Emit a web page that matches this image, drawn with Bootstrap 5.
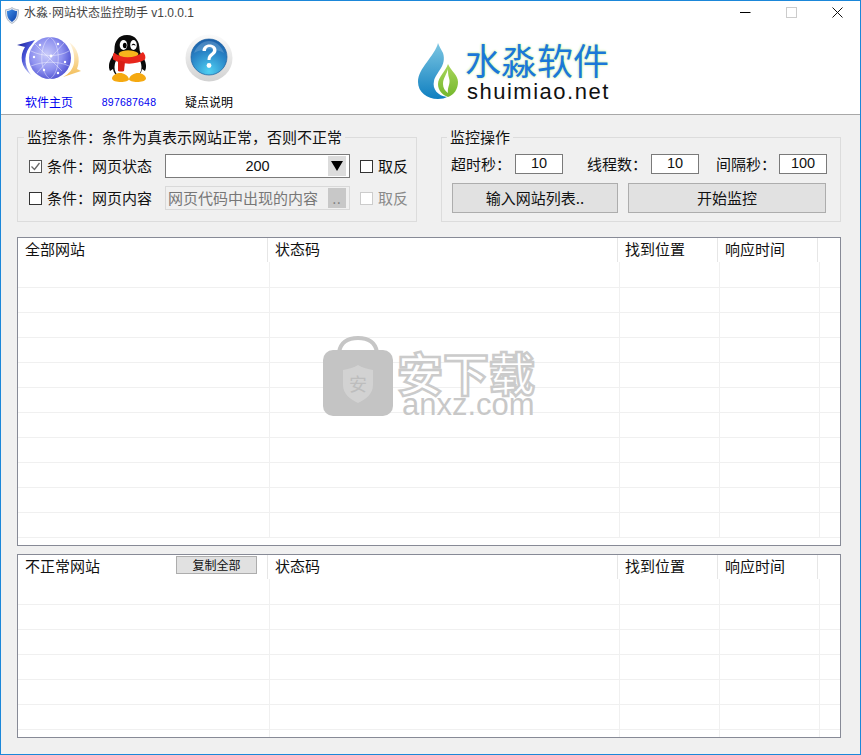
<!DOCTYPE html>
<html lang="zh-CN">
<head>
    <meta charset="UTF-8">
    <meta name="viewport" content="width=device-width, initial-scale=1.0">
    <title>水淼·网站状态监控助手</title>
    <link href="https://cdn.jsdelivr.net/npm/bootstrap@5.3.3/dist/css/bootstrap.min.css" rel="stylesheet">
    <style>
        html, body {
            margin: 0;
            height: 755px;
            overflow: hidden;
        }
        body {
            background: #f0f0f0;
            color: #111;
            font-family: "Noto Sans CJK SC", "Liberation Sans", sans-serif;
            font-size: 15px;
            line-height: 16px;
        }
        .app-window {
            height: 755px;
            border: 1px solid #1b87d9;
            background: #f0f0f0;
        }
        .top-area {
            height: 113px;
            background: #fff;
            border-bottom: 1px solid #a8a8a8;
            box-sizing: content-box;
        }
        .title-bar {
            height: 28px;
            padding: 0 0 0 4px;
        }
        .title-text {
            font-family: "Liberation Sans", "Noto Sans CJK SC", sans-serif;
            font-size: 12px;
            color: #444;
            margin-left: 5px;
            margin-top: -5px;
            line-height: 16px;
        }
        .win-btns {
            margin-right: 17px;
            gap: 35px;
            margin-top: -6px;
        }
        .tool-row {
            padding-left: 8px;
            height: 85px;
        }
        .tool-item {
            width: 80px;
            height: 80px;
            font-size: 12px;
            color: #000;
            text-decoration: none;
            padding-top: 5px;
        }
        .tool-item .tool-pic {
            height: 50px;
        }
        .tool-item .tool-label {
            margin-top: 11px;
            line-height: 14px;
        }
        .tool-blue {
            color: #0000f0;
        }
        .tool-num {
            font-family: "Liberation Sans", sans-serif;
            font-size: 10.5px;
            letter-spacing: .2px;
        }
        .brand {
            margin-left: 168px;
            margin-top: 10px;
            gap: 6px;
        }
        .brand-cn {
            font-size: 36px;
            line-height: 40px;
            color: #1b78d8;
            text-shadow: 0 0 3px #cdf0a8, 0 0 2px #d9f5bd;
        }
        .brand-en {
            font-family: "Liberation Sans", sans-serif;
            font-size: 22px;
            line-height: 22px;
            letter-spacing: 1.5px;
            color: #111;
            margin-top: 2px;
            margin-left: 2px;
        }
        .main-area {
            padding: 14px 19px 0 16px;
        }
        .group-box {
            width: 400px;
            border: 1px solid #dcdcdc;
            padding: 0 0 11px 11px;
            margin: 0;
            min-width: 0;
            height: 93px;
        }
        .group-box legend {
            float: none;
            width: auto;
            font-size: 15px;
            line-height: 16px;
            margin: 0 0 9px -5px;
            padding: 0 3px;
        }
        .group-ops {
            padding-left: 9px;
        }
        .group-ops legend {
            margin-left: -4px;
        }
        /* the traditional face sets the full-width colon in the middle of its cell */
        .mid-colon {
            font-family: "Noto Sans CJK TC", sans-serif;
        }
        .check-box.form-check-input {
            width: 13px;
            height: 13px;
            margin: 0 5px 0 0;
            border: 1px solid #333;
            border-radius: 0;
            flex: none;
            box-shadow: none;
        }
        .check-box.form-check-input:checked {
            background-color: #fff;
            border-color: #555;
            background-size: 11px;
            background-image: url("data:image/svg+xml,%3Csvg xmlns='http://www.w3.org/2000/svg' viewBox='0 0 11 11'%3E%3Cpath d='M1.5 5.5l3 3 5-6.500' fill='none' stroke='%23666' stroke-width='1.300'/%3E%3C/svg%3E");
        }
        .check-box.form-check-input:disabled {
            opacity: 1;
            border-color: #ccc;
        }
        .cond-row {
            height: 24px;
        }
        .cond-label {
            width: 118px;
            flex: none;
            white-space: nowrap;
        }
        .status-select.form-select {
            width: 185px;
            flex: none;
            height: 24px;
            padding: 0;
            border: 1px solid #7a7a7a;
            border-radius: 0;
            background-color: #fff;
            font-family: "Liberation Sans", sans-serif;
            font-size: 14.5px;
            line-height: 22px;
            text-align: center;
            text-align-last: center;
            color: #111;
            box-shadow: none;
            background-size: 18px 20px;
            background-position: right 3px center;
            background-image: url("data:image/svg+xml,%3Csvg xmlns='http://www.w3.org/2000/svg' viewBox='0 0 18 20'%3E%3Crect width='18' height='20' fill='%23dcdcdc'/%3E%3Cpath d='M3 5h12l-6 10z' fill='%23000'/%3E%3C/svg%3E");
        }
        .content-box {
            width: 185px;
            flex: none;
            height: 24px;
            border: 1px solid #d9d9d9;
            background: #f0f0f0;
            padding: 1px 3px 1px 0;
        }
        .content-box .form-control {
            border: 0;
            border-radius: 0;
            background: transparent;
            padding: 0 0 0 2px;
            font: inherit;
            color: #777;
            min-width: 0;
        }
        .dots-btn.btn {
            width: 18px;
            height: 20px;
            padding: 0;
            border: 0;
            border-radius: 0;
            background: #c8c8c8;
            color: #777;
            font-size: 13px;
            opacity: 1;
            letter-spacing: 1px;
            line-height: 22px;
        }
        .invert-wrap {
            margin-left: 10px;
            white-space: nowrap;
            flex: none;
        }
        .off-text {
            color: #8a8a8a;
        }
        .param-row {
            height: 20px;
            margin-bottom: 9px;
        }
        .param-label {
            white-space: nowrap;
            width: 64px;
            flex: none;
        }
        .gap-one {
            margin-left: 24px;
        }
        .gap-two {
            margin-left: 17px;
            width: 63px;
        }
        .num-input.form-control {
            width: 48px;
            height: 20px;
            min-height: 0;
            padding: 0;
            border: 1px solid #7a7a7a;
            border-radius: 0;
            background: #fff;
            font-family: "Liberation Sans", sans-serif;
            font-size: 14.5px;
            text-align: center;
            color: #111;
            flex: none;
        }
        .act-row {
            gap: 10px;
            margin-left: 1px;
        }
        .act-btn.btn {
            height: 30px;
            padding: 0;
            border: 1px solid #adadad;
            border-radius: 0;
            background: #e1e1e1;
            color: #111;
            font-size: 15px;
            line-height: 16px;
            width: 198px;
        }
        .act-btn.list-btn {
            width: 166px;
        }
        .web-table-wrap {
            border: 1px solid #878a96;
            background: #fff;
            width: 824px;
            overflow: hidden;
        }
        .t-all {
            height: 309px;
            margin-top: 15px;
        }
        .t-bad {
            height: 184px;
            margin-top: 8px;
        }
        .web-table-wrap .table {
            table-layout: fixed;
            width: 822px;
            margin: 0;
            --bs-table-bg: transparent;
            border-collapse: collapse;
        }
        .c-a { width: 251px; }
        .c-b { width: 350px; }
        .c-c { width: 100px; }
        .web-table-wrap th {
            height: 24px;
            padding: 3px 0 0 6px;
            font-weight: 400;
            font-size: 15px;
            line-height: 16px;
            vertical-align: top;
            border: 0;
            color: #111;
            white-space: nowrap;
            background: linear-gradient(#e6e6e6, #e6e6e6) no-repeat calc(100% - 1px) 0 / 1px 100%;
        }
        .web-table-wrap th:first-child {
            padding-left: 7px;
        }
        .web-table-wrap th:last-child {
            background: none;
        }
        .web-table-wrap td {
            height: 25px;
            padding: 0;
            border-width: 0 1px 1px 0;
            border-style: solid;
            border-color: #f0f0f0;
        }
        .web-table-wrap td:last-child {
            border-right: 0;
        }
        .copy-btn.btn {
            width: 81px;
            height: 18px;
            padding: 0;
            margin: -2px 12px 0 0;
            border: 1px solid #adadad;
            border-radius: 0;
            background: #e1e1e1;
            color: #111;
            font-size: 12px;
            line-height: 14px;
        }
        .water-mark {
            position: absolute;
            left: 321px;
            top: 334px;
            width: 220px;
            height: 84px;
        }
        .mark-cn {
            position: absolute;
            left: 75px;
            top: 15px;
            font-size: 46px;
            line-height: 42px;
            font-weight: 700;
            white-space: nowrap;
            color: #fff;
            -webkit-text-stroke: 2.5px #cbcbcb;
        }
        .mark-en {
            position: absolute;
            left: 80px;
            top: 57px;
            font-family: "Liberation Sans", sans-serif;
            font-size: 31px;
            line-height: 26px;
            color: #c8c8c8;
            white-space: nowrap;
        }
    </style>
</head>
<body>
    <div class="app-window position-relative">
        <div class="top-area">
            <div class="title-bar d-flex align-items-center">
                <svg width="14" height="17" viewBox="0 0 14 17">
                    <defs>
                        <linearGradient id="shieldFill" x1="0" y1="0" x2="1" y2="1">
                            <stop offset="0" stop-color="#3f8fe8"/>
                            <stop offset="1" stop-color="#0b3fa8"/>
                        </linearGradient>
                    </defs>
                    <path d="M7 .5C5 2 3 2.600 .5 2.800c0 6 .7 10.700 6.500 13.700 5.800-3 6.500-7.700 6.500-13.700C11 2.600 9 2 7 .5z" fill="#dfe6ef" stroke="#9aa5b5" stroke-width=".7"/>
                    <path d="M7 2.200C5.400 3.300 3.800 3.900 2 4.100c0 4.700.6 8.500 5 10.800 4.400-2.300 5-6.100 5-10.800-1.800-.2-3.400-.8-5-1.900z" fill="url(#shieldFill)"/>
                </svg>
                <span class="title-text flex-grow-1">水淼·网站状态监控助手 v1.0.0.1</span>
                <div class="win-btns d-flex align-items-center">
                    <svg width="11" height="11" viewBox="0 0 11 11"><path d="M0 5.500h10.500" stroke="#000" stroke-width="1"/></svg>
                    <svg width="11" height="11" viewBox="0 0 11 11"><rect x=".5" y=".5" width="10" height="10" fill="none" stroke="#ccc"/></svg>
                    <svg width="11" height="11" viewBox="0 0 11 11"><path d="M.5.500l10 10M10.500.500l-10 10" stroke="#111" stroke-width="1"/></svg>
                </div>
            </div>
            <div class="tool-row d-flex align-items-start">
                <a href="#" class="tool-item d-flex flex-column align-items-center tool-blue">
                    <div class="tool-pic">
                        <svg width="66" height="50" viewBox="0 0 66 50">
                            <defs>
                                <radialGradient id="globeFill" cx=".42" cy=".42" r=".62">
                                    <stop offset="0" stop-color="#c9cbfa"/>
                                    <stop offset=".6" stop-color="#8f92f0"/>
                                    <stop offset="1" stop-color="#5053d2"/>
                                </radialGradient>
                                <linearGradient id="swooshA" x1="0" y1="0" x2="1" y2="1">
                                    <stop offset="0" stop-color="#10188f"/>
                                    <stop offset=".45" stop-color="#4a55d8"/>
                                    <stop offset="1" stop-color="#e2e6fd"/>
                                </linearGradient>
                                <linearGradient id="swooshB" x1="0" y1="0" x2="0" y2="1">
                                    <stop offset="0" stop-color="#fff6e4"/>
                                    <stop offset="1" stop-color="#f3bd55"/>
                                </linearGradient>
                            </defs>
                            <path d="M1 11l18-5-3 4C8 18 7 30 15 41 5 33 3 22 9 13z" fill="url(#swooshA)"/>
                            <path d="M53 8c9 6 12 17 8 27l4 2-18 6c6-3 10-8 11-14 1-8-1-15-5-21z" fill="url(#swooshB)"/>
                            <circle cx="34" cy="24" r="21" fill="url(#globeFill)"/>
                            <path d="M34 3c-11 7-11 35 0 42M34 3c11 7 11 35 0 42M15 17c12 6 28 6 38 0M15 32c12-5 28-5 38 0M19 10l27 27M48 9L21 39" fill="none" stroke="#fff" stroke-width=".6" opacity=".7"/>
                            <g fill="#fff">
                                <circle cx="24" cy="11" r="1.200"/><circle cx="42" cy="10" r="1.200"/>
                                <circle cx="18" cy="23" r="1.200"/><circle cx="35" cy="22" r="1.400"/>
                                <circle cx="49" cy="28" r="1.200"/><circle cx="28" cy="36" r="1.200"/>
                                <circle cx="42" cy="39" r="1.200"/>
                            </g>
                        </svg>
                    </div>
                    <span class="tool-label">软件主页</span>
                </a>
                <a href="#" class="tool-item d-flex flex-column align-items-center tool-blue">
                    <div class="tool-pic">
                        <svg width="40" height="50" viewBox="0 0 40 50">
                            <path d="M18 1C9 1 5.500 8 5.500 15c0 3-.5 5-3 9C0 28-1 33 1 37l3-2c1 6 6 10 14.500 10S32 41 33 35l3 2c2-4 1-9-1.500-13-2.500-4-4-6-4-9C30.500 8 27 1 18 1z" fill="#0a0a0a"/>
                            <ellipse cx="19" cy="33" rx="13.500" ry="13" fill="#fff"/>
                            <ellipse cx="14.500" cy="11" rx="3.800" ry="5" fill="#fff"/>
                            <ellipse cx="24.500" cy="11" rx="3.300" ry="5" fill="#fff"/>
                            <ellipse cx="15.800" cy="11.500" rx="1.900" ry="2.800" fill="#000"/>
                            <path d="M22.500 11.500c.5-2.500 4-2.500 4.200.3-1.400-1-2.900-1-4.200-.3z" fill="#000"/>
                            <path d="M10 19c3-3.500 14-4 19 0 1 1.500-.5 3.500-3.500 4.300-3.500.8-8.500.8-12 0-3-.8-4.500-2.800-3.500-4.300z" fill="#f7b51c"/>
                            <path d="M5 18.500c7 6.500 21 6.500 29-.5 2 2 3 5 2 7.500-8 5.500-24 5.500-32 0-.5-2.500 0-5 1-7z" fill="#e8261b"/>
                            <path d="M9 26l7 2-1 9c-2 .8-4 .6-6 0z" fill="#d81e14"/>
                            <path d="M3 44.500c0-3 4-5.500 8-5.500 4 0 8 2.500 9 6 0 2-4 3-8 3s-9-1-9-3.500zM37 44.500c0-3-4-5.500-8-5.500-4 0-8 2.500-9 6 0 2 4 3 8 3s9-1 9-3.500z" fill="#f5a911"/>
                        </svg>
                    </div>
                    <span class="tool-label tool-num">897687648</span>
                </a>
                <a href="#" class="tool-item d-flex flex-column align-items-center">
                    <div class="tool-pic">
                        <svg width="48" height="50" viewBox="0 0 48 50">
                            <defs>
                                <linearGradient id="ringFill" x1="0" y1="0" x2="0" y2="1">
                                    <stop offset="0" stop-color="#fbfbfb"/>
                                    <stop offset="1" stop-color="#d2d2d2"/>
                                </linearGradient>
                                <radialGradient id="ballFill" cx=".5" cy=".9" r=".9">
                                    <stop offset="0" stop-color="#50d0f2"/>
                                    <stop offset=".6" stop-color="#2a86c8"/>
                                    <stop offset="1" stop-color="#1a5ea8"/>
                                </radialGradient>
                            </defs>
                            <circle cx="24" cy="24" r="23.500" fill="url(#ringFill)"/>
                            <circle cx="24" cy="23" r="18" fill="url(#ballFill)" stroke="#1d5f9e" stroke-width=".7"/>
                            <path d="M9 19c3-8 9-12 15-12s12 4 15 12c-9-5-21-5-30 0z" fill="#fff" opacity=".18"/>
                            <path d="M17.500 17c0-4 3-6.500 7-6.500s7 2.200 7 5.800c0 5-6 5-6 9.700h-3c0-6.500 5.500-6.500 5.500-9.900 0-1.900-1.500-3-3.500-3-2.200 0-3.400 1.400-3.600 3.900z" fill="#fff"/>
                            <circle cx="24" cy="31.500" r="2.400" fill="#fff"/>
                        </svg>
                    </div>
                    <span class="tool-label">疑点说明</span>
                </a>
                <div class="brand d-flex align-items-center">
                    <svg width="42" height="58" viewBox="0 0 42 58">
                        <defs>
                            <linearGradient id="dropBlue" x1="0" y1="0" x2="0" y2="1">
                                <stop offset="0" stop-color="#7cc6e2"/>
                                <stop offset="1" stop-color="#0f7fc0"/>
                            </linearGradient>
                            <linearGradient id="dropGreen" x1="0" y1="0" x2="0" y2="1">
                                <stop offset="0" stop-color="#a9d65c"/>
                                <stop offset="1" stop-color="#74b72c"/>
                            </linearGradient>
                        </defs>
                        <path d="M21 1C18 14 1 26 1 40c0 10 9 17 20 17 4 0 7-1 9-2-9-1-15-8-13-16 2-9 13-15 9-28C24 7 22 4 21 1z" fill="url(#dropBlue)"/>
                        <path d="M31 22c-2 7-10 13-10 20 0 6 4 11 10 13 6-2 10-8 10-15 0-7-7-11-10-18z" fill="url(#dropGreen)"/>
                        <path d="M31 27c-1 5-5 9-5 15 0 4 2 7 5 9-1-6 3-9 1-15-1-3-1-6-1-9z" fill="#fff"/>
                    </svg>
                    <div class="d-flex flex-column">
                        <span class="brand-cn">水淼软件</span>
                        <span class="brand-en">shuimiao.net</span>
                    </div>
                </div>
            </div>
        </div>

        <div class="main-area">
            <div class="d-flex justify-content-between">
                <fieldset class="group-box">
                    <legend>监控条件<span class="mid-colon">&#xFF1A;</span>条件为真表示网站正常&#xFF0C;否则不正常</legend>
                    <div class="cond-row d-flex align-items-center mb-2">
                        <input class="form-check-input check-box" type="checkbox" checked>
                        <span class="cond-label">条件<span class="mid-colon">&#xFF1A;</span>网页状态</span>
                        <select class="form-select status-select"><option>200</option></select>
                        <div class="invert-wrap d-flex align-items-center">
                            <input class="form-check-input check-box" type="checkbox">
                            <span>取反</span>
                        </div>
                    </div>
                    <div class="cond-row d-flex align-items-center">
                        <input class="form-check-input check-box" type="checkbox">
                        <span class="cond-label">条件<span class="mid-colon">&#xFF1A;</span>网页内容</span>
                        <div class="content-box d-flex align-items-center">
                            <input class="form-control" type="text" value="网页代码中出现的内容" disabled>
                            <button class="btn dots-btn flex-shrink-0" disabled>..</button>
                        </div>
                        <div class="invert-wrap d-flex align-items-center">
                            <input class="form-check-input check-box" type="checkbox" disabled>
                            <span class="off-text">取反</span>
                        </div>
                    </div>
                </fieldset>
                <fieldset class="group-box group-ops">
                    <legend>监控操作</legend>
                    <div class="param-row d-flex align-items-center">
                        <span class="param-label">超时秒<span class="mid-colon">&#xFF1A;</span></span>
                        <input class="form-control num-input" type="text" value="10">
                        <span class="param-label gap-one">线程数<span class="mid-colon">&#xFF1A;</span></span>
                        <input class="form-control num-input" type="text" value="10">
                        <span class="param-label gap-two">间隔秒<span class="mid-colon">&#xFF1A;</span></span>
                        <input class="form-control num-input" type="text" value="100">
                    </div>
                    <div class="act-row d-flex">
                        <button class="btn act-btn list-btn">输入网站列表..</button>
                        <button class="btn act-btn">开始监控</button>
                    </div>
                </fieldset>
            </div>

            <div class="web-table-wrap t-all" data-rows="11"></div>
            <div class="web-table-wrap t-bad" data-rows="7"></div>
        </div>

        <div class="water-mark">
            <svg width="72" height="82" viewBox="0 0 72 82">
                <path d="M17 17C19 6 27 3 36 3s17 3 19 14" fill="none" stroke="#c6c6c6" stroke-width="4"/>
                <rect x="1" y="15" width="70" height="66" rx="10" fill="#c4c4c4"/>
                <path d="M36 30c5 3 10 4 15 5v15c0 9-7 14-15 18-8-4-15-9-15-18V35c5-1 10-2 15-5z" fill="#d2d2d2"/>
                <text x="36" y="56" font-size="18" text-anchor="middle" fill="#bdbdbd" font-family="Noto Sans CJK SC, sans-serif">安</text>
            </svg>
            <span class="mark-cn">安下载</span>
            <span class="mark-en">anxz.com</span>
        </div>
    </div>

    <script>
        // builds the two list tables, only the first column head differs
        const heads = ['状态码', '找到位置', '响应时间', ''];
        document.querySelectorAll('.web-table-wrap').forEach((wrap) => {
            const bad = wrap.classList.contains('t-bad');
            const first = bad
                ? '<div class="d-flex justify-content-between"><span>不正常网站</span><button class="btn copy-btn">复制全部</button></div>'
                : '全部网站';
            let rows = '';
            for (let i = 0; i < Number(wrap.dataset.rows); i++) {
                rows += '<tr><td></td><td></td><td></td><td></td><td></td></tr>';
            }
            wrap.innerHTML = `<table class="table">
                <colgroup><col class="c-a"><col class="c-b"><col class="c-c"><col class="c-c"><col></colgroup>
                <thead><tr><th>${first}</th>${heads.map((h) => `<th>${h}</th>`).join('')}</tr></thead>
                <tbody>${rows}</tbody></table>`;
        });
    </script>
    <script src="https://cdn.jsdelivr.net/npm/bootstrap@5.3.3/dist/js/bootstrap.bundle.min.js"></script>
</body>
</html>
